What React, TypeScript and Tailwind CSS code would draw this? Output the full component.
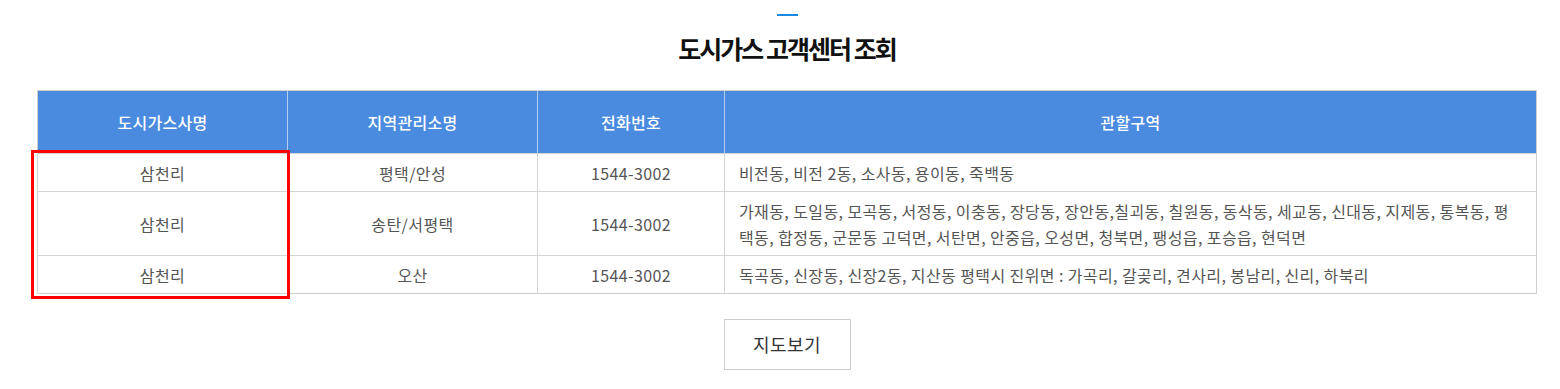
import React from "react";

const rows = [
  { company: "삼천리", office: "평택/안성", phone: "1544-3002", area: "비전동, 비전 2동, 소사동, 용이동, 죽백동" },
  {
    company: "삼천리",
    office: "송탄/서평택",
    phone: "1544-3002",
    area: "가재동, 도일동, 모곡동, 서정동, 이충동, 장당동, 장안동,칠괴동, 칠원동, 동삭동, 세교동, 신대동, 지제동, 통복동, 평택동, 합정동, 군문동 고덕면, 서탄면, 안중읍, 오성면, 청북면, 팽성읍, 포승읍, 현덕면",
  },
  { company: "삼천리", office: "오산", phone: "1544-3002", area: "독곡동, 신장동, 신장2동, 지산동 평택시 진위면 : 가곡리, 갈곶리, 견사리, 봉남리, 신리, 하북리" },
];

export default function App() {
  const font = { fontFamily: '"Noto Sans CJK KR", "Noto Sans", sans-serif' };
  return (
    <div className="w-[1560px] h-[389px] bg-white overflow-hidden" style={font}>
      <div className="ml-[37px] w-[1500px] pt-[14px] flex flex-col items-center">
        <div className="w-[21px] h-[2px] bg-[#1a87e0]" />
        <h2 className="mt-[17px] text-[25px] leading-[30px] font-bold tracking-[-2px] text-[#111]">도시가스 고객센터 조회</h2>
        <div className="relative mt-[27px] w-full">
          <table className="w-full border-collapse table-fixed border border-[#cfcfcf]">
            <colgroup>
              <col className="w-[250px]" />
              <col className="w-[250px]" />
              <col className="w-[187px]" />
              <col />
            </colgroup>
            <thead>
              <tr className="bg-[#4a8be0] h-[63px]">
                {["도시가스사명", "지역관리소명", "전화번호", "관할구역"].map((h) => (
                  <th key={h} className="border-l border-[#b5cff2] first:border-l-0 text-white text-[16px] font-medium tracking-[0.3px] text-center">
                    {h}
                  </th>
                ))}
              </tr>
            </thead>
            <tbody>
              {rows.map((r, i) => (
                <tr key={i} className="border-t border-[#d5d5d5] text-[16px] tracking-[0.4px] leading-[26px] text-[#555]">
                  <td className="border-l border-[#d5d5d5] text-center pt-[6px] pb-[5px]">{r.company}</td>
                  <td className="border-l border-[#d5d5d5] text-center pt-[6px] pb-[5px]">{r.office}</td>
                  <td className="border-l border-[#d5d5d5] text-center pt-[6px] pb-[5px]">{r.phone}</td>
                  <td className="border-l border-[#d5d5d5] text-left pt-[6px] pb-[5px] pl-[14px] pr-[14px]">{r.area}</td>
                </tr>
              ))}
            </tbody>
          </table>
          <div className="absolute left-[-6px] top-[60px] w-[259px] h-[149px] border-[3px] border-[#ff0000] pointer-events-none" />
        </div>
        <button className="mt-[25px] w-[127px] h-[51px] border border-[#cccccc] bg-white text-[18px] tracking-[0.5px] text-[#333]">지도보기</button>
      </div>
    </div>
  );
}
